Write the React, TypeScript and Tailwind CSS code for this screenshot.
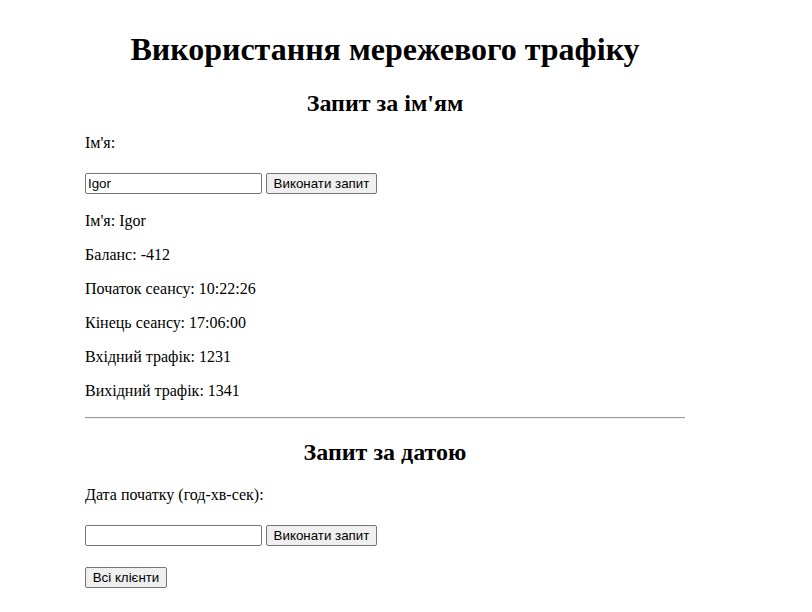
import React from "react";

const serif = { fontFamily: '"Liberation Serif", "Times New Roman", serif' };

function Ctrl({ value }: { value?: string }) {
  return (
    <div className="flex items-center gap-[4px]">
      <input
        defaultValue={value}
        className="w-[177px] h-[21px] box-border border border-[#767676] rounded-[2px] px-[2px] text-[13.33px] text-black bg-white outline-none font-['Liberation_Sans',Arial,sans-serif]"
      />
      <button className="h-[21px] w-[111px] box-border border border-[#767676] rounded-[2px] bg-[#efefef] text-[13.33px] text-black font-['Liberation_Sans',Arial,sans-serif] leading-none">
        Виконати запит
      </button>
    </div>
  );
}

export default function App() {
  const rows = [
    "Ім'я: Igor",
    "Баланс: -412",
    "Початок сеансу: 10:22:26",
    "Кінець сеансу: 17:06:00",
    "Вхідний трафік: 1231",
    "Вихідний трафік: 1341",
  ];
  return (
    <div className="min-h-[612px] bg-white text-black" style={serif}>
      <div className="ml-[85px] w-[600px] pt-[31px] flex flex-col">
        <h1 className="text-[32px] leading-[37px] font-bold text-center">
          Використання мережевого трафіку
        </h1>
        <h2 className="mt-[21px] text-[24px] leading-[28px] font-bold text-center">
          Запит за ім'ям
        </h2>
        <p className="mt-[17px] text-[16px] leading-[18px]">Ім'я:</p>
        <div className="mt-[21px]">
          <Ctrl value="Igor" />
        </div>
        <div className="mt-[18px] flex flex-col gap-[16px]">
          {rows.map((r) => (
            <p key={r} className="text-[16px] leading-[18px]">
              {r}
            </p>
          ))}
        </div>
        <div className="mt-[17px] h-[2px] border-t border-t-[#9a9a9a] border-b border-b-[#eeeeee]" />
        <h2 className="mt-[19px] text-[24px] leading-[28px] font-bold text-center">
          Запит за датою
        </h2>
        <p className="mt-[20px] text-[16px] leading-[18px]">Дата початку (год-хв-сек):</p>
        <div className="mt-[21px]">
          <Ctrl />
        </div>
        <div className="mt-[19px]">
          <button className="h-[21px] w-[82px] box-border border border-[#767676] rounded-[2px] bg-[#efefef] text-[13.33px] text-black font-['Liberation_Sans',Arial,sans-serif] leading-none">
            Всі клієнти
          </button>
        </div>
      </div>
    </div>
  );
}
